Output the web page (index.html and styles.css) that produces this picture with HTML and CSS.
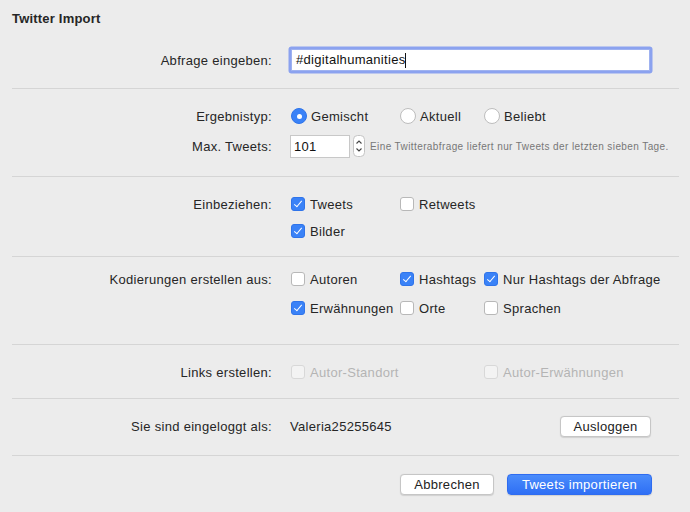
FILE: index.html
```html
<!DOCTYPE html>
<html lang="de">
<head>
<meta charset="utf-8">
<title>Twitter Import</title>
<link rel="stylesheet" href="styles.css">
</head>
<body>
<div class="dialog">
  <section class="sec sec-query">
    <h1 class="title">Twitter Import</h1>
    <div class="row">
      <label class="lbl">Abfrage eingeben:</label>
      <div class="ctl"><div class="textfield">#digitalhumanities<span class="caret"></span></div></div>
    </div>
  </section>

  <section class="sec sec-type">
    <div class="row">
      <span class="lbl">Ergebnistyp:</span>
      <div class="ctl cols">
        <span class="opt c1"><span class="radio on"></span>Gemischt</span>
        <span class="opt c2"><span class="radio"></span>Aktuell</span>
        <span class="opt c3"><span class="radio"></span>Beliebt</span>
      </div>
    </div>
    <div class="row row2">
      <span class="lbl">Max. Tweets:</span>
      <div class="ctl inline">
        <span class="numfield">101</span>
        <span class="stepper"><svg width="12" height="22" viewBox="0 0 12 22"><rect x="0.5" y="0.5" width="11" height="21" rx="4" fill="#fff" stroke="#c4c4c4"/><path d="M3.5 8.5 L6 6 L8.5 8.5" fill="none" stroke="#444" stroke-width="1.1"/><path d="M3.5 13.5 L6 16 L8.5 13.5" fill="none" stroke="#444" stroke-width="1.1"/></svg></span>
        <span class="hint">Eine Twitterabfrage liefert nur Tweets der letzten sieben Tage.</span>
      </div>
    </div>
  </section>

  <section class="sec sec-incl">
    <div class="row">
      <span class="lbl">Einbeziehen:</span>
      <div class="ctl cols">
        <span class="opt c1"><span class="cb on"></span>Tweets</span>
        <span class="opt c2"><span class="cb"></span>Retweets</span>
      </div>
    </div>
    <div class="row row3">
      <span class="lbl"></span>
      <div class="ctl cols">
        <span class="opt c1"><span class="cb on"></span>Bilder</span>
      </div>
    </div>
  </section>

  <section class="sec sec-codes">
    <div class="row">
      <span class="lbl">Kodierungen erstellen aus:</span>
      <div class="ctl cols">
        <span class="opt c1"><span class="cb"></span>Autoren</span>
        <span class="opt c2"><span class="cb on"></span>Hashtags</span>
        <span class="opt c3"><span class="cb on"></span>Nur Hashtags der Abfrage</span>
      </div>
    </div>
    <div class="row row4">
      <span class="lbl"></span>
      <div class="ctl cols">
        <span class="opt c1"><span class="cb on"></span>Erwähnungen</span>
        <span class="opt c2"><span class="cb"></span>Orte</span>
        <span class="opt c3"><span class="cb"></span>Sprachen</span>
      </div>
    </div>
  </section>

  <section class="sec sec-links">
    <div class="row">
      <span class="lbl">Links erstellen:</span>
      <div class="ctl cols">
        <span class="opt c1 dis"><span class="cb"></span>Autor-Standort</span>
        <span class="opt c3 dis"><span class="cb"></span>Autor-Erwähnungen</span>
      </div>
    </div>
  </section>

  <section class="sec sec-login">
    <div class="row">
      <span class="lbl">Sie sind eingeloggt als:</span>
      <div class="ctl split">
        <span class="user">Valeria25255645</span>
        <button class="btn btn-logout">Ausloggen</button>
      </div>
    </div>
  </section>

  <footer class="footer">
    <button class="btn btn-cancel">Abbrechen</button>
    <button class="btn btn-primary">Tweets importieren</button>
  </footer>
</div>
</body>
</html>
```

FILE: styles.css
```css
html, body {
  margin: 0;
  padding: 0;
  background: #ececec;
}
body {
  font-family: "Liberation Sans", Arial, sans-serif;
  font-size: 13px;
  letter-spacing: 0.3px;
  color: #222;
  width: 690px;
  height: 512px;
  overflow: hidden;
}
.dialog {
  padding: 0 11px 0 12px;
}
.sec {
  border-bottom: 1px solid #d5d5d5;
  display: flex;
  flex-direction: column;
}
.title {
  margin: 0;
  font-size: 13px;
  font-weight: bold;
  line-height: 16px;
  height: 16px;
  color: #262626;
  letter-spacing: 0.2px;
}
.sec-query { padding: 11px 0 15px; height: 62px; }
.sec-query .row { margin-top: 21px; }
.sec-type { padding: 15px 0 0; height: 72px; }
.sec-incl { padding: 15px 0 0; height: 64px; }
.sec-codes { padding: 10px 0 0; height: 77px; }
.sec-links { padding: 15px 0 0; height: 38px; }
.sec-login { padding: 15px 0 0; height: 41px; }

.row {
  display: grid;
  grid-template-columns: 260px 1fr;
  column-gap: 17px;
  height: 24px;
  align-items: center;
}
.row2 { margin-top: 6px; }
.row3 { margin-top: 3px; }
.row4 { margin-top: 5px; }

.lbl {
  text-align: right;
  color: #262626;
  white-space: nowrap;
}
.ctl {
  display: flex;
  align-items: center;
  height: 24px;
}
.cols {
  display: grid;
  grid-template-columns: 109px 84px 1fr;
}
.c1 { grid-column: 1; }
.c2 { grid-column: 2; }
.c3 { grid-column: 3; }
.opt {
  display: flex;
  align-items: center;
  white-space: nowrap;
  color: #262626;
  margin-left: 2px;
}
.dis { color: #b4b4b4; }

.textfield {
  margin-left: 2px;
  width: 349px;
  height: 20px;
  line-height: 20px;
  background: #fff;
  border: 1px solid #9fb2f0;
  box-shadow: 0 0 0 2.5px #8ba2ef;
  border-radius: 1px;
  padding: 0 4px;
  color: #111;
  display: flex;
  align-items: center;
}
.caret {
  display: inline-block;
  width: 1px;
  height: 15px;
  background: #111;
  margin-left: 0;
}

.radio {
  width: 14px;
  height: 14px;
  border-radius: 50%;
  background: #fff;
  border: 1px solid #bdbdbd;
  margin-right: 4px;
  box-sizing: content-box;
  flex: none;
  position: relative;
}
.radio.on {
  background: #3a82f7;
  border-color: #2f74ea;
}
.radio.on::after {
  content: "";
  position: absolute;
  left: 4.5px;
  top: 4.5px;
  width: 5px;
  height: 5px;
  border-radius: 50%;
  background: #fff;
}

.cb {
  width: 12px;
  height: 12px;
  border-radius: 3px;
  border: 1px solid #b8b8b8;
  background: #fff;
  margin-right: 5px;
  flex: none;
  position: relative;
}
.dis .cb {
  border-color: #d8d8d8;
  background: #f3f3f3;
}
.cb.on {
  background: #3a82f7;
  border-color: #2f74ea;
}
.cb.on::after {
  content: "";
  position: absolute;
  left: 3.5px;
  top: 0.5px;
  width: 3px;
  height: 7px;
  border: solid #fff;
  border-width: 0 1.6px 1.6px 0;
  transform: rotate(40deg);
}

.inline { gap: 0; }
.numfield {
  width: 52px;
  height: 21px;
  line-height: 22px;
  background: #fff;
  border: 1px solid #c8c8c8;
  padding: 0 3px;
  color: #111;
  margin-left: 1px;
}
.stepper {
  display: flex;
  margin-left: 3px;
  height: 22px;
}
.hint {
  font-size: 10px;
  letter-spacing: 0.4px;
  color: #777;
  margin-left: 5px;
  white-space: nowrap;
}

.split {
  justify-content: space-between;
  padding-right: 28px;
}
.user {
  margin-left: 1px;
  color: #262626;
}

.btn {
  font-family: "Liberation Sans", Arial, sans-serif;
  font-size: 13px;
  letter-spacing: 0.3px;
  height: 21px;
  border-radius: 4px;
  padding: 0;
  color: #222;
  background: #fff;
  border: 1px solid #c6c6c6;
  box-shadow: 0 0.5px 1px rgba(0,0,0,0.12);
  line-height: 19px;
}
.btn-logout { width: 91px; }
.footer {
  display: flex;
  justify-content: flex-end;
  gap: 13px;
  padding: 18px 27px 0 0;
}
.btn-cancel { width: 94px; }
.btn-primary {
  width: 145px;
  color: #fff;
  border: 1px solid #2f6cf0;
  background: linear-gradient(#4a8cfb, #2f6ff5);
}
```
